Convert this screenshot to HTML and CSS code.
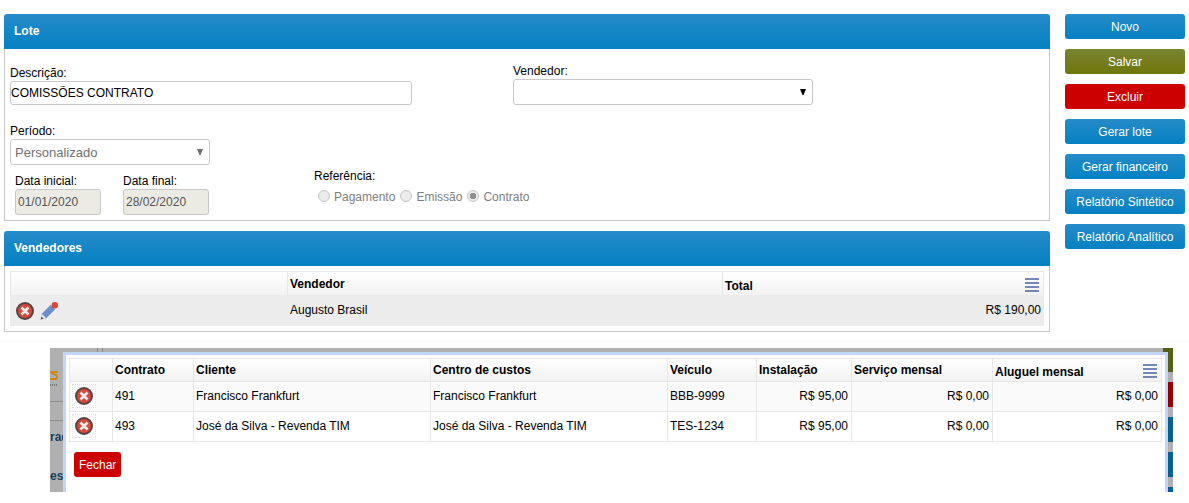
FILE: index.html
```html
<!DOCTYPE html>
<html lang="pt-BR">
<head>
<meta charset="utf-8">
<title>Lote</title>
<link rel="stylesheet" href="styles.css">
</head>
<body>
<svg class="sprites" aria-hidden="true">
  <symbol id="icon-delete" viewBox="0 0 18 18">
    <circle cx="9" cy="9" r="8" fill="#d8473a" stroke="#544644" stroke-width="2"/>
    <path d="M5.500 5.500l7 7M12.500 5.500l-7 7" stroke="#f6eeee" stroke-width="2.600"/>
  </symbol>
  <symbol id="icon-edit" viewBox="0 0 18 18">
    <path d="M2 11.500L10.800 2.800L15.300 7.200L6.500 16L1 17.300Z" fill="#6d8fc9"/>
    <path d="M2 12L6 15.900L1 17.300Z" fill="#e6e8ee"/>
    <path d="M1.500 14.700L3.500 16.600L.6 17.600Z" fill="#3c4660"/>
    <path d="M10.800 3L12 1.800L16.300 6L15.100 7.200Z" fill="#dfe4ee"/>
    <circle cx="14.800" cy="3.200" r="3.200" fill="#dc4438"/>
  </symbol>
  <symbol id="icon-menu" viewBox="0 0 14 14">
    <path d="M0 1h14M0 5h14M0 9h14M0 13h14" stroke="#7388b6" stroke-width="2"/>
  </symbol>
  <symbol id="icon-arrow" viewBox="0 0 6 6">
    <path d="M0 0H6L3.500 6H2.500Z" fill="currentColor"/>
  </symbol>
</svg>

<div class="page">
  <main class="content">
    <section class="panel">
      <h2 class="panel-title">Lote</h2>
      <div class="panel-body form">
        <div class="form-row">
          <div class="field description">
            <label for="descricao">Descrição:</label>
            <input class="text-box" id="descricao" type="text" value="COMISSÕES CONTRATO">
          </div>
          <div class="field seller">
            <label for="vendedor">Vendedor:</label>
            <span class="select-wrap">
              <select class="select" id="vendedor"><option></option></select>
              <svg class="arrow"><use href="#icon-arrow"/></svg>
            </span>
          </div>
        </div>
        <div class="form-row">
          <div class="period">
            <div class="field period-select">
              <label for="periodo">Período:</label>
              <span class="select-wrap muted">
                <select class="select" id="periodo"><option>Personalizado</option></select>
                <svg class="arrow"><use href="#icon-arrow"/></svg>
              </span>
            </div>
            <div class="dates">
              <div class="field">
                <label for="inicial">Data inicial:</label>
                <input class="text-box date" id="inicial" type="text" value="01/01/2020" disabled>
              </div>
              <div class="field">
                <label for="final">Data final:</label>
                <input class="text-box date" id="final" type="text" value="28/02/2020" disabled>
              </div>
            </div>
          </div>
          <fieldset class="reference">
            <legend>Referência:</legend>
            <div class="radios">
              <label><input class="radio" type="radio" name="ref" disabled>Pagamento</label>
              <label><input class="radio" type="radio" name="ref" disabled>Emissão</label>
              <label><input class="radio" type="radio" name="ref" checked disabled>Contrato</label>
            </div>
          </fieldset>
        </div>
      </div>
    </section>

    <section class="panel">
      <h2 class="panel-title">Vendedores</h2>
      <div class="panel-body">
        <table class="grid sellers">
          <colgroup><col class="s-actions"><col class="s-name"><col></colgroup>
          <thead>
            <tr>
              <th></th>
              <th>Vendedor</th>
              <th><div class="head-menu">Total<button class="icon-button menu-button" aria-label="Colunas"><svg class="menu-icon"><use href="#icon-menu"/></svg></button></div></th>
            </tr>
          </thead>
          <tbody>
            <tr>
              <td>
                <div class="actions">
                  <button class="icon-button" aria-label="Excluir vendedor"><svg class="icon"><use href="#icon-delete"/></svg></button>
                  <button class="icon-button" aria-label="Editar vendedor"><svg class="icon"><use href="#icon-edit"/></svg></button>
                </div>
              </td>
              <td>Augusto Brasil</td>
              <td class="money">R$ 190,00</td>
            </tr>
          </tbody>
        </table>
      </div>
    </section>
  </main>

  <aside class="sidebar">
    <button class="button">Novo</button>
    <button class="button save">Salvar</button>
    <button class="button danger">Excluir</button>
    <button class="button">Gerar lote</button>
    <button class="button">Gerar financeiro</button>
    <button class="button">Relatório Sintético</button>
    <button class="button">Relatório Analítico</button>
  </aside>
</div>

<div class="overlay">
  <svg class="behind behind-left" viewBox="0 0 60 144" aria-hidden="true">
    <path d="M0 53.500H60M0 72.500H60M47.500 0V53M52.500 0V53" stroke="#8b8b8b"/>
    <path d="M0 24H8M0 31H6Q9 28 4 26L1 25" fill="none" stroke="#c98a1d" stroke-width="2"/>
    <path d="M0 37H8" stroke="#777" stroke-width="2" stroke-dasharray="1 1"/>
    <text class="behind-text" x="0" y="93">rad</text>
    <text class="behind-text" x="0" y="132">esa</text>
  </svg>
  <div class="behind behind-right" aria-hidden="true">
    <span class="bar bar-save"></span>
    <span class="bar bar-danger"></span>
    <span class="bar"></span>
    <span class="bar"></span>
    <span class="bar"></span>
  </div>
  <div class="dialog" role="dialog" aria-label="Contratos">
    <table class="grid contracts">
      <colgroup><col class="c-action"><col class="c-number"><col class="c-name"><col class="c-name"><col class="c-vehicle"><col class="c-install"><col class="c-service"><col class="c-rent"></colgroup>
      <thead>
        <tr>
          <th></th>
          <th>Contrato</th>
          <th>Cliente</th>
          <th>Centro de custos</th>
          <th>Veículo</th>
          <th>Instalação</th>
          <th>Serviço mensal</th>
          <th><div class="head-menu">Aluguel mensal<button class="icon-button menu-button" aria-label="Colunas"><svg class="menu-icon"><use href="#icon-menu"/></svg></button></div></th>
        </tr>
      </thead>
      <tbody>
        <tr>
          <td><button class="icon-button boxed" aria-label="Excluir contrato 491"><svg class="icon"><use href="#icon-delete"/></svg></button></td>
          <td>491</td>
          <td>Francisco Frankfurt</td>
          <td>Francisco Frankfurt</td>
          <td>BBB-9999</td>
          <td class="money">R$ 95,00</td>
          <td class="money">R$ 0,00</td>
          <td class="money">R$ 0,00</td>
        </tr>
        <tr>
          <td><button class="icon-button boxed" aria-label="Excluir contrato 493"><svg class="icon"><use href="#icon-delete"/></svg></button></td>
          <td>493</td>
          <td>José da Silva - Revenda TIM</td>
          <td>José da Silva - Revenda TIM</td>
          <td>TES-1234</td>
          <td class="money">R$ 95,00</td>
          <td class="money">R$ 0,00</td>
          <td class="money">R$ 0,00</td>
        </tr>
      </tbody>
    </table>
    <button class="button danger close">Fechar</button>
  </div>
</div>
</body>
</html>
```

FILE: styles.css
```css
* {
  box-sizing: border-box;
}

body {
  margin: 0;
  background: #fff;
  color: #000;
  font: 12px/15px "Liberation Sans", Arial, sans-serif;
}

button,
input,
select {
  font: inherit;
  color: inherit;
}

.sprites {
  position: absolute;
  width: 0;
  height: 0;
}

.page {
  display: flex;
  align-items: flex-start;
  gap: 15px;
  padding: 14px 4px 8px;
  border-bottom: 1px solid #f8f8f8;
}

.content {
  flex: 1;
  display: flex;
  flex-direction: column;
  gap: 10px;
}

/* Panels */

.panel-title {
  margin: 0;
  padding: 10px;
  border-radius: 3px 3px 0 0;
  background: linear-gradient(#268bc9, #0481c2);
  color: #fff;
  font-size: 12px;
  line-height: 15px;
}

.panel-body {
  padding: 5px;
  border: 1px solid #c8c8c8;
  border-top: 0;
}

/* Form */

.form {
  display: flex;
  flex-direction: column;
  gap: 19px;
  padding-top: 15px;
}

.form-row {
  display: flex;
  align-items: flex-end;
}

.field {
  display: flex;
  flex-direction: column;
}

.description {
  width: 402px;
  margin-right: 101px;
}

.seller {
  width: 300px;
}

.period {
  display: flex;
  flex-direction: column;
  gap: 9px;
  width: 304px;
}

.period-select {
  width: 200px;
}

.dates {
  display: flex;
  gap: 22px;
  padding-left: 5px;
}

.text-box {
  height: 24px;
  padding: 0;
  border: 1px solid #c8c8c8;
  border-radius: 3px;
  background: #fff;
}

.date {
  width: 86px;
  height: 26px;
  padding: 0 2px;
  background: #ebebe4;
  color: #545454;
}

.select-wrap {
  position: relative;
  display: flex;
}

.select {
  appearance: none;
  flex: 1;
  height: 26px;
  padding: 0 20px 0 4px;
  border: 1px solid #c8c8c8;
  border-radius: 3px;
  background: #fff;
  font-size: 13px;
}

.arrow {
  position: absolute;
  top: 10px;
  right: 7px;
  width: 6px;
  height: 6px;
  pointer-events: none;
}

.muted {
  color: #707070;
}

.reference {
  margin: 0;
  padding: 0 0 10px;
  border: 0;
}

.reference legend {
  padding: 0;
}

.radios {
  display: flex;
  gap: 5px;
  padding: 6px 0 0 4px;
  color: #808080;
}

.radios label {
  display: flex;
  align-items: flex-start;
  gap: 4px;
}

.radio {
  appearance: none;
  width: 12px;
  height: 12px;
  margin: 0;
  border: 1px solid #c4c4c4;
  border-radius: 50%;
  background: #ececec;
}

.radio:checked {
  background: radial-gradient(circle, #8e8e8e 0 3px, #ececec 3px);
}

/* Buttons */

.sidebar {
  display: flex;
  flex-direction: column;
  gap: 10px;
  width: 120px;
}

.button {
  height: 25px;
  padding: 2px 5px 0;
  border: 0;
  border-radius: 3px;
  background: linear-gradient(#268bc9, #0481c2);
  color: #fff;
  white-space: nowrap;
}

.save {
  background: linear-gradient(#7a8433, #6f760a);
}

.danger {
  background: #c00;
}

.icon-button {
  display: block;
  padding: 0;
  border: 0;
  background: none;
}

.icon {
  display: block;
  width: 18px;
  height: 18px;
}

.menu-icon {
  display: block;
  width: 14px;
  height: 14px;
}

/* Tables */

.grid {
  width: 100%;
  table-layout: fixed;
  border-collapse: separate;
  border-spacing: 0;
}

.grid th,
.grid td {
  padding: 0 2px;
  text-align: left;
}

.grid th {
  height: 24px;
  border-top: 1px solid #e8e8e8;
  border-left: 1px solid #e8e8e8;
  background: linear-gradient(#fff, #f2f2f2);
}

.grid .money {
  padding-right: 3px;
  text-align: right;
}

.head-menu {
  display: flex;
  align-items: flex-end;
  justify-content: space-between;
  padding: 4px 2px 0 0;
}

.menu-button {
  padding-bottom: 2px;
}

.sellers th {
  padding-top: 1px;
}

.sellers th:last-child {
  border-right: 1px solid #e8e8e8;
}

.sellers td {
  height: 31px;
  padding: 0 3px;
  background: #ececec;
}

.sellers .actions {
  display: flex;
  gap: 6px;
  padding-left: 3px;
}

.s-actions {
  width: 277px;
}

.s-name {
  width: 435px;
}

/* Dialog over the dimmed page */

.overlay {
  position: relative;
  margin: 7px 16px 11px 50px;
  padding: 4px 5px 0 13px;
  overflow: hidden;
  background: #b0b0b0;
}

.behind {
  position: absolute;
  top: 0;
}

.behind-left {
  left: 0;
  width: 60px;
  height: 144px;
}

.behind-text {
  fill: #173f5c;
  font-weight: bold;
}

.behind-right {
  right: 0;
  display: flex;
  flex-direction: column;
  gap: 10px;
  width: 10px;
}

.bar {
  height: 25px;
  background: #07608f;
}

.bar-save {
  height: 24px;
  background: #566018;
}

.bar-danger {
  background: #930000;
}

.dialog {
  position: relative;
  min-height: 140px;
  padding: 3px 4px 15px 3px;
  border: 3px solid #c3d5f8;
  border-bottom: 0;
  background: #fff;
}

.contracts {
  border-right: 1px solid #e8e8e8;
}

.contracts th {
  height: 23px;
}

.contracts td {
  height: 30px;
  padding-bottom: 1px;
  border-top: 1px solid #e8e8e8;
  border-left: 1px solid #e8e8e8;
}

.contracts tbody tr:first-child td {
  background: #fafafa;
}

.contracts tbody tr:last-child td {
  height: 31px;
  border-bottom: 1px solid #e8e8e8;
}

.boxed {
  padding: 2px;
  border: 1px dotted #e2e2e2;
  background: #fff;
}

.c-action {
  width: 43px;
}

.c-number {
  width: 81px;
}

.c-name {
  width: 237px;
}

.c-vehicle {
  width: 89px;
}

.c-install {
  width: 95px;
}

.c-service {
  width: 141px;
}

.c-rent {
  width: 169px;
}

.close {
  display: block;
  margin: 10px 0 0 5px;
}
```
